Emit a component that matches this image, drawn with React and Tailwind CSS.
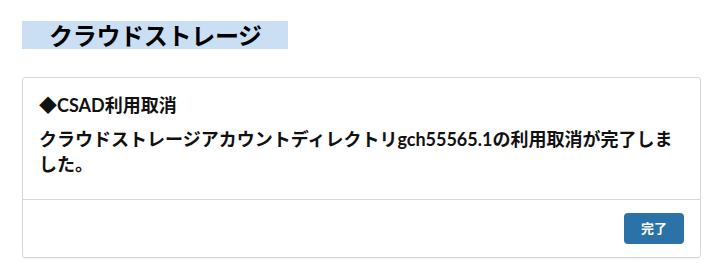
export default function App() {
  const font = { fontFamily: 'Lato, "Noto Sans CJK JP", sans-serif' };
  return (
    <div className="bg-white w-[722px] h-[271px] pl-[22px] pt-[21px]" style={font}>
      <div className="w-[266px] h-[28px] bg-[#cadff3] pl-[27px] flex items-center">
        <span className="text-[24px] leading-none font-bold text-black tracking-[-0.3px]" style={{ fontFamily: '"Noto Sans CJK JP", sans-serif' }}>
          クラウドストレージ
        </span>
      </div>
      <div className="mt-[28px] w-[679px] border border-[#d6d6d6] rounded-[3px] shadow-[0_1px_1px_rgba(0,0,0,0.05)]">
        <div className="px-4 pt-[15px] pb-[22px] text-[#111]">
          <div className="text-[18px] leading-[25px] font-bold">◆CSAD利用取消</div>
          <div className="mt-[9px] text-[18px] leading-[25px] font-bold">
            クラウドストレージアカウントディレクトリgch55565.1の利用取消が完了しました。
          </div>
        </div>
        <div className="border-t border-[#d6d6d6] px-4 py-[13px] flex justify-end">
          <button className="w-[60px] h-[31px] rounded-[4px] bg-[#2a72a8] text-white text-[13px] font-bold">
            完了
          </button>
        </div>
      </div>
    </div>
  );
}
